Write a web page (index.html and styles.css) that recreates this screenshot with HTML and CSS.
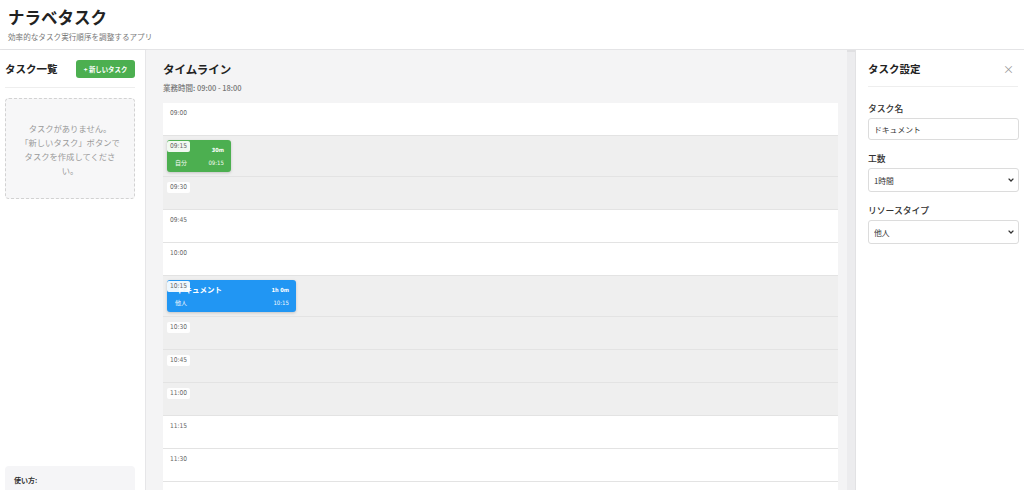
FILE: index.html
```html
<!DOCTYPE html>
<html lang="ja">
<head>
<meta charset="utf-8">
<title>ナラベタスク</title>
<link rel="stylesheet" href="styles.css">
</head>
<body>
<header class="app-header">
  <h1 class="app-title">ナラベタスク</h1>
  <p class="app-subtitle">効率的なタスク実行順序を調整するアプリ</p>
</header>
<main class="layout">
  <aside class="sidebar">
    <div class="panel-head sidebar-head">
      <h2 class="sidebar-title">タスク一覧</h2>
      <button class="btn-new">+ 新しいタスク</button>
    </div>
    <div class="empty-box">タスクがありません。<br>「新しいタスク」ボタンでタスクを作成してください。</div>
    <div class="usage">
      <h3 class="usage-title">使い方:</h3>
    </div>
  </aside>
  <section class="center">
    <h2 class="tl-title">タイムライン</h2>
    <p class="tl-hours">業務時間: 09:00 - 18:00</p>
    <div class="timeline">
      <div class="slot"><span class="slot-time">09:00</span></div>
      <div class="slot busy">
        <div class="task green" style="width:64px">
          <div class="task-row"><span class="task-name"></span><span class="task-dur">30m</span></div>
          <div class="task-row sub"><span>自分</span><span>09:15</span></div>
        </div>
        <span class="slot-time">09:15</span>
      </div>
      <div class="slot busy"><span class="slot-time">09:30</span></div>
      <div class="slot"><span class="slot-time">09:45</span></div>
      <div class="slot"><span class="slot-time">10:00</span></div>
      <div class="slot busy">
        <div class="task blue" style="width:129px">
          <div class="task-row"><span class="task-name">ドキュメント</span><span class="task-dur">1h 0m</span></div>
          <div class="task-row sub"><span>他人</span><span>10:15</span></div>
        </div>
        <span class="slot-time">10:15</span>
      </div>
      <div class="slot busy"><span class="slot-time">10:30</span></div>
      <div class="slot busy"><span class="slot-time">10:45</span></div>
      <div class="slot busy"><span class="slot-time">11:00</span></div>
      <div class="slot"><span class="slot-time">11:15</span></div>
      <div class="slot"><span class="slot-time">11:30</span></div>
      <div class="slot"></div>
    </div>
  </section>
  <div class="scroll-strip"></div>
  <aside class="settings">
    <div class="panel-head settings-head">
      <h2 class="settings-title">タスク設定</h2>
      <span class="close">×</span>
    </div>
    <div class="field">
      <label class="field-label">タスク名</label>
      <input class="field-input" type="text" value="ドキュメント">
    </div>
    <div class="field">
      <label class="field-label">工数</label>
      <div class="select-wrap">
        <select class="field-input field-select"><option>1時間</option></select>
        <svg class="chev" width="6" height="4" viewBox="0 0 6 4"><path d="M0.6 0.6 L3 3 L5.4 0.6" fill="none" stroke="#333" stroke-width="1.3"/></svg>
      </div>
    </div>
    <div class="field">
      <label class="field-label">リソースタイプ</label>
      <div class="select-wrap">
        <select class="field-input field-select"><option>他人</option></select>
        <svg class="chev" width="6" height="4" viewBox="0 0 6 4"><path d="M0.6 0.6 L3 3 L5.4 0.6" fill="none" stroke="#333" stroke-width="1.3"/></svg>
      </div>
    </div>
  </aside>
</main>
</body>
</html>
```

FILE: styles.css
```css
* { box-sizing: border-box; }
html, body { margin: 0; padding: 0; }
body {
  font-family: "Noto Sans CJK JP", "Noto Sans", sans-serif;
  color: #333;
  background: #fff;
  width: 1024px;
  height: 490px;
  overflow: hidden;
}
.app-header {
  height: 50px;
  padding: 7px 8px 0;
  border-bottom: 1px solid #e4e4e6;
  background: #fff;
}
.app-title {
  margin: 0;
  font-size: 16.5px;
  line-height: 20px;
  font-weight: 700;
  color: #222;
}
.app-subtitle {
  margin: 4px 0 0;
  font-size: 7.6px;
  line-height: 12px;
  color: #777;
}
.layout {
  display: flex;
  height: 440px;
}
.sidebar {
  width: 146px;
  flex: none;
  padding: 10px 10px 0 5px;
  background: #fff;
  border-right: 1px solid #e6e6e8;
  box-shadow: 1px 0 2px rgba(0,0,0,0.04);
  display: flex;
  flex-direction: column;
  overflow: hidden;
}
.sidebar > * { flex: none; }
.panel-head {
  display: flex;
  align-items: center;
  justify-content: space-between;
  border-bottom: 1px solid #eeeeee;
}
.sidebar-head {
  height: 28px;
  padding-bottom: 9px;
  align-items: flex-start;
}
.sidebar-title {
  margin: 0;
  font-size: 10.5px;
  line-height: 18px;
  font-weight: 700;
  color: #222;
}
.btn-new {
  height: 18px;
  width: 59px;
  padding: 0;
  border: 0;
  border-radius: 3px;
  background: #4caf50;
  color: #fff;
  font-family: inherit;
  font-size: 6.4px;
  font-weight: 700;
}
.empty-box {
  margin-top: 10px;
  height: 101px;
  padding: 22px 12px 0;
  border: 1px dashed #d2d2d2;
  border-radius: 4px;
  background: #f7f7f8;
  color: #9a9a9a;
  font-size: 8.3px;
  line-height: 14px;
  text-align: center;
}
.usage {
  margin-top: 267px;
  height: 60px;
  padding: 9px 9px 8px;
  border-radius: 4px;
  background: #f5f5f7;
}
.usage-title {
  margin: 0;
  font-size: 7px;
  line-height: 10px;
  font-weight: 700;
  color: #333;
}
.center {
  flex: 1;
  min-width: 0;
  padding: 11px 9px 0 17px;
  background: #f4f4f5;
  overflow: hidden;
}
.tl-title {
  margin: 0;
  font-size: 11.5px;
  line-height: 16px;
  font-weight: 700;
  color: #222;
}
.tl-hours {
  margin: 5px 0 0;
  font-size: 7.5px;
  line-height: 12px;
  font-weight: 500;
  color: #777;
}
.timeline {
  margin-top: 9px;
  background: #fff;
  border-radius: 3px 3px 0 0;
}
.slot {
  position: relative;
  min-height: 33px;
  padding: 4px;
  border-bottom: 1px solid #e3e3e3;
  background: #fff;
}
.slot.busy { background: #efefef; }
.slot-time {
  position: absolute;
  top: 5px;
  left: 4px;
  padding: 1px 3px;
  border-radius: 2px;
  background: rgba(255,255,255,0.92);
  font-family: "DejaVu Sans Condensed", "DejaVu Sans", sans-serif;
  font-stretch: condensed;
  font-size: 6.6px;
  line-height: 9px;
  color: #666;
}
.task {
  height: 32px;
  padding: 5px 7px 4px 8px;
  border-radius: 3px;
  color: #fff;
  box-shadow: 0 1px 3px rgba(0,0,0,0.18);
  display: flex;
  flex-direction: column;
  justify-content: space-between;
}
.task.green { background: #4caf50; }
.task.blue { background: #2196f3; }
.task-row {
  display: flex;
  justify-content: space-between;
  align-items: center;
  line-height: 10px;
}
.task-name {
  font-size: 7.5px;
  font-weight: 700;
  padding-left: 2px;
}
.task-dur {
  font-family: "DejaVu Sans Condensed", "DejaVu Sans", sans-serif;
  font-size: 5.6px;
  font-weight: 700;
}
.task-row.sub {
  font-size: 6px;
  font-family: "DejaVu Sans Condensed", "Noto Sans CJK JP", sans-serif;
  opacity: 0.95;
}
.scroll-strip {
  width: 8px;
  flex: none;
  background: #ececee;
  border-top: 2px solid #e0e0e2;
}
.settings {
  width: 169px;
  flex: none;
  padding: 10px 6px 0 12px;
  border-left: 1px solid #e2e2e4;
  background: #fff;
}
.settings-head {
  height: 27px;
  padding-bottom: 8px;
}
.settings-title {
  margin: 0;
  font-size: 10.5px;
  line-height: 18px;
  font-weight: 700;
  color: #222;
}
.close {
  font-size: 11px;
  line-height: 18px;
  color: #999;
  padding-right: 4px;
}
.field { margin-bottom: 13px; }
.settings-head + .field { margin-top: 16px; }
.field-label {
  display: block;
  margin-bottom: 3px;
  font-size: 8.8px;
  line-height: 12px;
  font-weight: 500;
  color: #333;
}
.field-input {
  display: block;
  width: 151px;
  height: 22px;
  padding: 0 5px;
  border: 1px solid #dcdcdc;
  border-radius: 3px;
  background: #fff;
  font-family: inherit;
  font-size: 7.8px;
  color: #333;
}
.select-wrap {
  position: relative;
  width: 151px;
}
.field-select {
  height: 24px;
  padding: 0 5px;
  -webkit-appearance: none;
  appearance: none;
}
.chev {
  position: absolute;
  right: 5px;
  top: 10px;
}
```
